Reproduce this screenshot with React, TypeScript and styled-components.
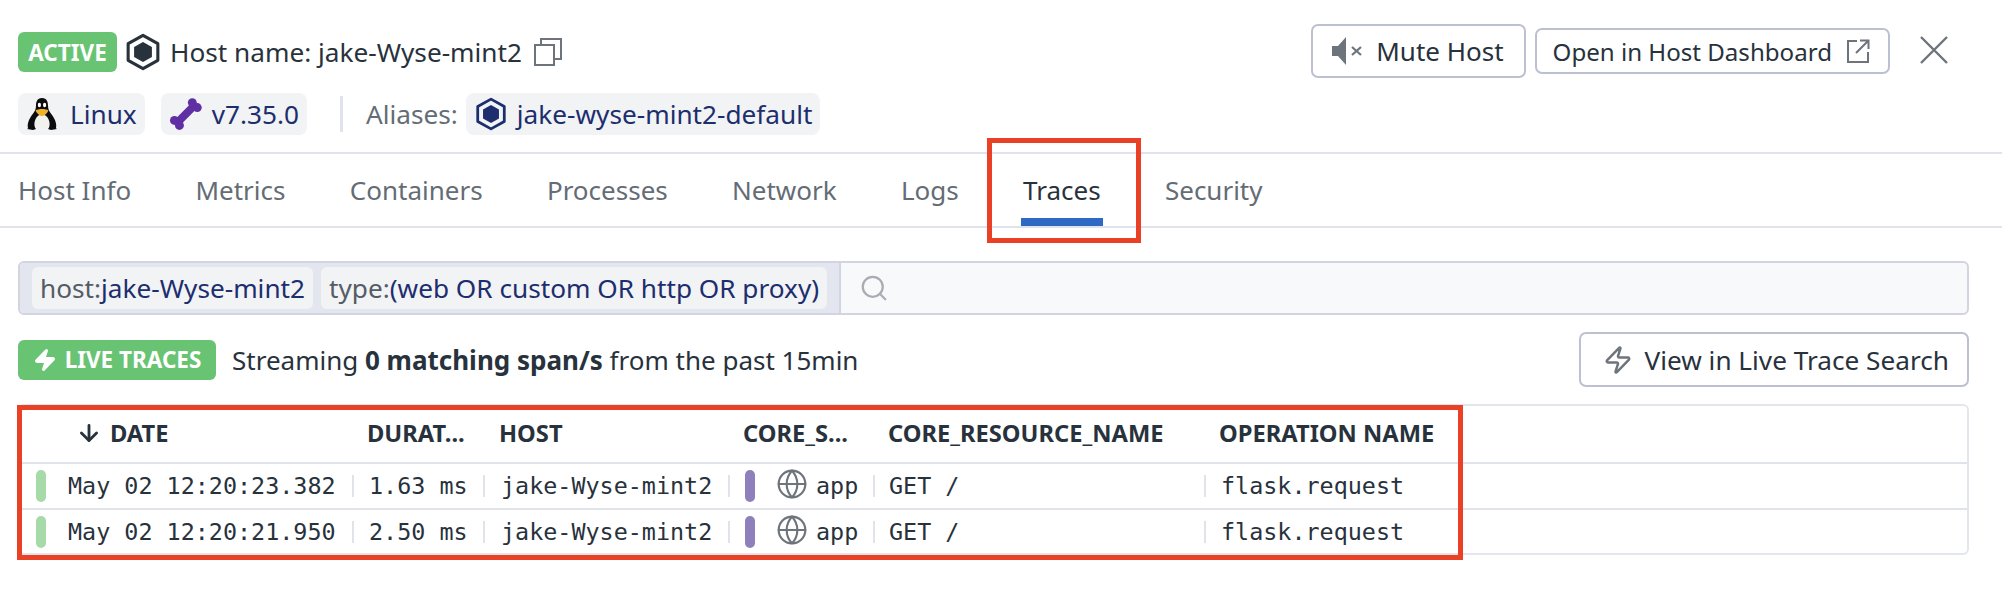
import React from 'react';
import styled, { createGlobalStyle } from 'styled-components';
import { Globe, Search, Zap, ArrowDown } from 'lucide-react';

const GlobalStyle = createGlobalStyle`
  html, body {
    margin: 0;
    padding: 0;
    background: #ffffff;
  }
  body {
    font-family: "Noto Sans", "Open Sans", sans-serif;
    color: #28323c;
  }
`;

const Page = styled.div`
  position: relative;
  width: 2002px;
  height: 590px;
  overflow: hidden;
  background: #fff;
`;

// Header
const Header = styled.div`
  display: flex;
  justify-content: space-between;
  height: 152px;
  padding: 24px 54px 0 18px;
  box-sizing: border-box;
`;

const HeaderLeft = styled.div`
  display: flex;
  flex-direction: column;
  gap: 21px;
  padding-top: 8px;
`;

const Row = styled.div`
  display: flex;
  align-items: center;
`;

const GreenBadge = styled.div<{ $w: number }>`
  display: flex;
  align-items: center;
  justify-content: center;
  gap: 8px;
  width: ${(p) => p.$w}px;
  height: 40px;
  border-radius: 6px;
  background: #68c472;
  color: #fff;
  font-size: 22.5px;
  font-weight: 700;
  white-space: nowrap;
  box-sizing: border-box;
`;

const HostIcon = styled.div`
  display: flex;
  margin-left: 7px;
`;

const HostName = styled.span`
  font-size: 26.2px;
  line-height: 40px;
  margin: 0 12px 0 8px;
  white-space: nowrap;
`;

const Chip = styled.div<{ $gap?: number; $w?: number }>`
  display: flex;
  align-items: center;
  gap: ${(p) => p.$gap ?? 12}px;
  height: 42px;
  ${(p) => (p.$w ? `width: ${p.$w}px;` : '')}
  padding: 0 8px;
  border-radius: 8px;
  background: #f2f3f5;
  color: #1c2e6e;
  font-size: 26.2px;
  white-space: nowrap;
  box-sizing: border-box;
`;

const ChipGroup = styled(Row)`
  gap: 16px;
`;

const Divider = styled.div`
  width: 3px;
  height: 36px;
  margin: 0 23px 0 33px;
  background: #e1e3ec;
`;

const Aliases = styled.span`
  color: #646c75;
  font-size: 26.2px;
  margin-right: 8px;
  white-space: nowrap;
`;

const HeaderActions = styled.div`
  display: flex;
  align-items: flex-start;
  gap: 9px;
`;

const OutlineButton = styled.div<{ $h: number; $fs: number; $mt?: number; $pl: number; $pr: number; $gap: number }>`
  display: flex;
  align-items: center;
  gap: ${(p) => p.$gap}px;
  height: ${(p) => p.$h}px;
  margin-top: ${(p) => p.$mt ?? 0}px;
  padding: 0 ${(p) => p.$pr}px 0 ${(p) => p.$pl}px;
  background: #fff;
  border: 2px solid #bcc0d2;
  border-radius: 7px;
  font-size: ${(p) => p.$fs}px;
  white-space: nowrap;
  box-sizing: border-box;
`;

const CloseButton = styled.div`
  display: flex;
  margin: 12px 0 0 21px;
`;

// Tabs
const TabBar = styled.div`
  display: flex;
  gap: 64.3px;
  height: 76px;
  padding: 0 18px;
  box-sizing: border-box;
  border-top: 2px solid #e1e3ea;
  border-bottom: 2px solid #e1e3ea;
`;

const Tab = styled.div<{ $active?: boolean }>`
  position: relative;
  display: flex;
  align-items: center;
  font-size: 26px;
  color: ${(p) => (p.$active ? '#28323c' : '#646c75')};

  ${(p) =>
    p.$active &&
    `
    &::after {
      content: '';
      position: absolute;
      left: -2px;
      right: -2px;
      bottom: 0;
      height: 8px;
      background: #2e6ac4;
    }
  `}
`;

// Search
const SearchBar = styled.div`
  display: flex;
  height: 54px;
  margin: 33px 33px 0 18px;
  border: 2px solid #d2d4e1;
  border-radius: 6px;
  background: #f8f9fa;
  box-sizing: border-box;
  overflow: hidden;
`;

const FilterGroup = styled.div`
  display: flex;
  align-items: center;
  gap: 8px;
  padding: 0 12px;
  background: #e3e6ef;
  border-right: 2px solid #d2d4e1;
`;

const FilterChip = styled.div`
  display: flex;
  align-items: center;
  height: 42px;
  padding: 0 8px;
  border-radius: 6px;
  background: #f2f3f5;
  color: #1c2e6e;
  font-size: 26.2px;
  white-space: nowrap;
`;

const FilterKey = styled.span`
  color: #545c66;
`;

const SearchIconWrap = styled.div`
  display: flex;
  align-items: center;
  padding-left: 18px;
  color: #a9adb3;
`;

// Live row
const LiveRow = styled.div`
  display: flex;
  align-items: center;
  justify-content: space-between;
  height: 55px;
  margin: 17px 33px 0 18px;
`;

const LiveLeft = styled(Row)`
  gap: 16px;
`;

const StreamText = styled.span`
  font-size: 26px;
  white-space: nowrap;

  b {
    font-weight: 700;
  }
`;

// Table
const Table = styled.div`
  margin: 17px 33px 0 18px;
  height: 151px;
  border: 2px solid #e4e6ee;
  border-radius: 6px;
  box-sizing: border-box;
`;

const HeaderRow = styled.div`
  display: flex;
  align-items: center;
  height: 58px;
  padding-bottom: 2px;
  box-sizing: border-box;
  border-bottom: 2px solid #e1e3ea;
`;

const DataRow = styled.div`
  display: flex;
  align-items: center;
  height: 44px;
  box-sizing: border-box;

  & + & {
    height: 46px;
    border-top: 2px solid #e1e3ea;
  }
`;

const HeadCell = styled.div<{ $w: number; $pl: number }>`
  display: flex;
  align-items: center;
  gap: 8px;
  width: ${(p) => p.$w}px;
  padding-left: ${(p) => p.$pl}px;
  box-sizing: border-box;
  font-size: 23.7px;
  font-weight: 700;
  white-space: nowrap;
`;

const Cell = styled.div<{ $w: number; $pl: number; $last?: boolean }>`
  position: relative;
  display: flex;
  align-items: center;
  width: ${(p) => p.$w}px;
  height: 100%;
  padding-left: ${(p) => p.$pl}px;
  box-sizing: border-box;
  font-family: "DejaVu Sans Mono", "Liberation Mono", monospace;
  font-size: 23.4px;
  white-space: nowrap;

  &::after {
    content: '';
    display: ${(p) => (p.$last ? 'none' : 'block')};
    position: absolute;
    right: 0;
    top: 11px;
    bottom: 11px;
    width: 2px;
    background: #e1e3ea;
  }
`;

const DateText = styled.span`
  margin-left: 22px;
`;

const StatusPill = styled.div<{ $color: string; $ml: number }>`
  flex: none;
  width: 10px;
  height: 32px;
  border-radius: 5px;
  margin-left: ${(p) => p.$ml}px;
  background: ${(p) => p.$color};
`;

const ServiceIcon = styled.div`
  display: flex;
  margin: 0 8px 0 21px;
  color: #6d747c;
  transform: translateY(-2px);
`;

// Annotation boxes drawn over the screenshot
const Annotation = styled.div<{ $l: number; $t: number; $w: number; $h: number }>`
  position: absolute;
  left: ${(p) => p.$l}px;
  top: ${(p) => p.$t}px;
  width: ${(p) => p.$w}px;
  height: ${(p) => p.$h}px;
  border: 5px solid #ea4126;
  box-sizing: border-box;
  pointer-events: none;
`;

const Hexagon = ({ color, size }: { color: string; size: number }) => (
  <svg width={size} height={size} viewBox="0 0 32 32">
    <path d="M16 2 L28.5 9 V23 L16 30 L3.5 23 V9 Z" fill="none" stroke={color} strokeWidth="2.6" strokeLinejoin="round" />
    <path d="M16 7.5 L23.5 11.8 V20.2 L16 24.5 L8.5 20.2 V11.8 Z" fill={color} />
  </svg>
);

const CopyIcon = () => (
  <svg width="28" height="28" viewBox="0 0 28 28" fill="none" stroke="#6d747c" strokeWidth="2">
    <rect x="1" y="7" width="19" height="20" />
    <path d="M7 7 V1 H27 V21 H20" />
  </svg>
);

const Penguin = () => (
  <svg width="32" height="32" viewBox="0 0 32 32">
    <path d="M16 0 C11 0 10 4 10 8 C10 12 8 14 6 17 C3 21 1 26 2 30 L30 30 C31 26 29 21 26 17 C24 14 22 12 22 8 C22 4 21 0 16 0 Z" fill="#0c0c0e" />
    <path d="M9 30 C7 24 10 17 16 16 C22 17 25 24 23 30 Z" fill="#f1f1ee" />
    <ellipse cx="13.4" cy="7" rx="1.6" ry="2.2" fill="#fff" />
    <ellipse cx="18.6" cy="7" rx="1.6" ry="2.2" fill="#fff" />
    <path d="M9.5 12.5 C12 10.5 20 10.5 22.5 12.5 C21 16 18 18 16 18 C14 18 11 16 9.5 12.5 Z" fill="#eeb22a" />
    <path d="M1 31 L7 27 L10 31 L7 32 Z M31 31 L25 27 L22 31 L25 32 Z" fill="#0c0c0e" />
  </svg>
);

const Bone = () => (
  <svg width="34" height="34" viewBox="0 0 34 34" fill="#5f2fa3">
    <path d="M9 25 L25 9" stroke="#5f2fa3" strokeWidth="8" />
    <circle cx="23.5" cy="5.5" r="4.5" />
    <circle cx="28.5" cy="10.5" r="4.5" />
    <circle cx="5.5" cy="23.5" r="4.5" />
    <circle cx="10.5" cy="28.5" r="4.5" />
  </svg>
);

const MuteIcon = () => (
  <svg width="32" height="30" viewBox="0 0 32 30" fill="#6d747c">
    <path d="M1 10 H7 L15 1 V29 L7 20 H1 Z" />
    <path d="M21 11 L30 19 M30 11 L21 19" fill="none" stroke="#6d747c" strokeWidth="2.2" />
  </svg>
);

const ExternalIcon = () => (
  <svg width="24" height="24" viewBox="0 0 24 24" fill="none" stroke="#6d747c" strokeWidth="2">
    <path d="M11 2 H2 V23 H22 V13" />
    <path d="M10 14 L22 2 M14 1.5 H22.5 V10" />
  </svg>
);

const CloseIcon = () => (
  <svg width="28" height="28" viewBox="0 0 28 28" stroke="#6d747c" strokeWidth="2.4">
    <path d="M1 1 L27 27 M27 1 L1 27" />
  </svg>
);

const tabs = ['Host Info', 'Metrics', 'Containers', 'Processes', 'Network', 'Logs', 'Traces', 'Security'];

const rows = [
  { date: 'May 02 12:20:23.382', duration: '1.63 ms' },
  { date: 'May 02 12:20:21.950', duration: '2.50 ms' },
];

const App: React.FC = () => (
  <Page>
    <GlobalStyle />
    <Header>
      <HeaderLeft>
        <Row>
          <GreenBadge $w={99}>ACTIVE</GreenBadge>
          <HostIcon>
            <Hexagon color="#28323c" size={38} />
          </HostIcon>
          <HostName>Host name: jake-Wyse-mint2</HostName>
          <CopyIcon />
        </Row>
        <Row>
          <ChipGroup>
            <Chip $w={127}>
              <Penguin />
              Linux
            </Chip>
            <Chip $w={146} $gap={9}>
              <Bone />
              v7.35.0
            </Chip>
          </ChipGroup>
          <Divider />
          <Aliases>Aliases:</Aliases>
          <Chip $gap={9}>
            <Hexagon color="#1c2e6e" size={34} />
            jake-wyse-mint2-default
          </Chip>
        </Row>
      </HeaderLeft>
      <HeaderActions>
        <OutlineButton $h={54} $fs={26} $pl={18} $pr={20} $gap={13}>
          <MuteIcon />
          Mute Host
        </OutlineButton>
        <OutlineButton $h={46} $fs={24.1} $mt={4} $pl={16} $pr={18} $gap={14}>
          Open in Host Dashboard
          <ExternalIcon />
        </OutlineButton>
        <CloseButton>
          <CloseIcon />
        </CloseButton>
      </HeaderActions>
    </Header>

    <TabBar>
      {tabs.map((t) => (
        <Tab key={t} $active={t === 'Traces'}>
          {t}
        </Tab>
      ))}
    </TabBar>

    <SearchBar>
      <FilterGroup>
        <FilterChip>
          <FilterKey>host:</FilterKey>jake-Wyse-mint2
        </FilterChip>
        <FilterChip>
          <FilterKey>type:</FilterKey>(web OR custom OR http OR proxy)
        </FilterChip>
      </FilterGroup>
      <SearchIconWrap>
        <Search size={30} strokeWidth={1.8} />
      </SearchIconWrap>
    </SearchBar>

    <LiveRow>
      <LiveLeft>
        <GreenBadge $w={198}>
          <Zap size={24} fill="#fff" stroke="#fff" />
          LIVE TRACES
        </GreenBadge>
        <StreamText>
          Streaming <b>0 matching span/s</b> from the past 15min
        </StreamText>
      </LiveLeft>
      <OutlineButton $h={55} $fs={26.2} $pl={22} $pr={18} $gap={12}>
        <Zap size={30} stroke="#6d747c" strokeWidth={2} />
        View in Live Trace Search
      </OutlineButton>
    </LiveRow>

    <Table>
      <HeaderRow>
        <HeadCell $w={334} $pl={56}>
          <ArrowDown size={26} strokeWidth={2.6} />
          DATE
        </HeadCell>
        <HeadCell $w={131} $pl={13}>DURAT...</HeadCell>
        <HeadCell $w={245} $pl={14}>HOST</HeadCell>
        <HeadCell $w={145} $pl={13}>CORE_S...</HeadCell>
        <HeadCell $w={331} $pl={13}>CORE_RESOURCE_NAME</HeadCell>
        <HeadCell $w={500} $pl={13}>OPERATION NAME</HeadCell>
      </HeaderRow>
      {rows.map((r) => (
        <DataRow key={r.date}>
          <Cell $w={334} $pl={16}>
            <StatusPill $color="#a6dba9" $ml={0} />
            <DateText>{r.date}</DateText>
          </Cell>
          <Cell $w={131} $pl={15}>{r.duration}</Cell>
          <Cell $w={245} $pl={16}>jake-Wyse-mint2</Cell>
          <Cell $w={145} $pl={0}>
            <StatusPill $color="#8f80bb" $ml={15} />
            <ServiceIcon>
              <Globe size={32} strokeWidth={1.6} />
            </ServiceIcon>
            app
          </Cell>
          <Cell $w={331} $pl={14}>GET /</Cell>
          <Cell $w={500} $pl={15} $last>flask.request</Cell>
        </DataRow>
      ))}
    </Table>

    <Annotation $l={987} $t={138} $w={154} $h={105} />
    <Annotation $l={17} $t={405} $w={1446} $h={155} />
  </Page>
);

export default App;
